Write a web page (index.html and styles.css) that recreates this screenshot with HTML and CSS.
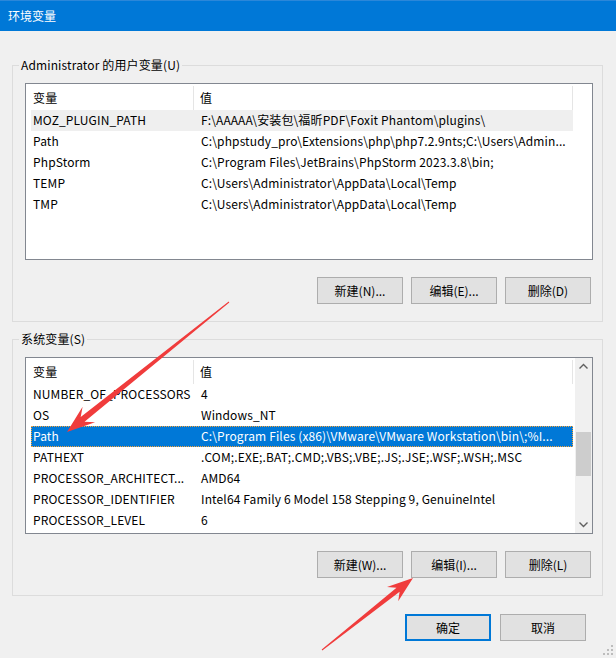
FILE: index.html
```html
<!DOCTYPE html>
<html lang="zh-CN" class="html">
<head>
    <meta charset="UTF-8">
    <meta name="viewport" content="width=device-width, initial-scale=1.0">
    <title>环境变量</title>
    <link rel="stylesheet" href="styles.css">
</head>
<body class="body">
    <header class="titlebar">环境变量</header>

    <main class="dialog">
        <fieldset class="group group_user">
            <legend class="group__title">Administrator 的用户变量(U)</legend>
            <div class="list">
                <div class="list__body">
                    <div class="list__head">
                        <div class="list__col list__col_name">变量</div>
                        <div class="list__col list__col_value">值</div>
                    </div>
                    <div class="list__row list__row_hover">
                        <span class="list__cell">MOZ_PLUGIN_PATH</span>
                        <span class="list__cell">F:\AAAAA\安装包\福昕PDF\Foxit Phantom\plugins\</span>
                    </div>
                    <div class="list__row">
                        <span class="list__cell">Path</span>
                        <span class="list__cell">C:\phpstudy_pro\Extensions\php\php7.2.9nts;C:\Users\Admin...</span>
                    </div>
                    <div class="list__row">
                        <span class="list__cell">PhpStorm</span>
                        <span class="list__cell">C:\Program Files\JetBrains\PhpStorm 2023.3.8\bin;</span>
                    </div>
                    <div class="list__row">
                        <span class="list__cell">TEMP</span>
                        <span class="list__cell">C:\Users\Administrator\AppData\Local\Temp</span>
                    </div>
                    <div class="list__row">
                        <span class="list__cell">TMP</span>
                        <span class="list__cell">C:\Users\Administrator\AppData\Local\Temp</span>
                    </div>
                </div>
            </div>
            <div class="group__buttons">
                <button class="button">新建(N)...</button>
                <button class="button">编辑(E)...</button>
                <button class="button">删除(D)</button>
            </div>
        </fieldset>

        <fieldset class="group group_system">
            <legend class="group__title">系统变量(S)</legend>
            <div class="list">
                <div class="list__body">
                    <div class="list__head">
                        <div class="list__col list__col_name">变量</div>
                        <div class="list__col list__col_value">值</div>
                    </div>
                    <div class="list__row">
                        <span class="list__cell">NUMBER_OF_PROCESSORS</span>
                        <span class="list__cell">4</span>
                    </div>
                    <div class="list__row">
                        <span class="list__cell">OS</span>
                        <span class="list__cell">Windows_NT</span>
                    </div>
                    <div class="list__row list__row_selected">
                        <span class="list__cell">Path</span>
                        <span class="list__cell">C:\Program Files (x86)\VMware\VMware Workstation\bin\;%I...</span>
                    </div>
                    <div class="list__row">
                        <span class="list__cell">PATHEXT</span>
                        <span class="list__cell">.COM;.EXE;.BAT;.CMD;.VBS;.VBE;.JS;.JSE;.WSF;.WSH;.MSC</span>
                    </div>
                    <div class="list__row">
                        <span class="list__cell">PROCESSOR_ARCHITECT...</span>
                        <span class="list__cell">AMD64</span>
                    </div>
                    <div class="list__row">
                        <span class="list__cell">PROCESSOR_IDENTIFIER</span>
                        <span class="list__cell">Intel64 Family 6 Model 158 Stepping 9, GenuineIntel</span>
                    </div>
                    <div class="list__row">
                        <span class="list__cell">PROCESSOR_LEVEL</span>
                        <span class="list__cell">6</span>
                    </div>
                </div>
                <div class="scrollbar">
                    <svg class="scrollbar__arrow" width="17" height="17" viewBox="0 0 17 17">
                        <polyline points="4.5,10.5 8.5,6.5 12.5,10.5" fill="none" stroke="#606060" stroke-width="1.4"/>
                    </svg>
                    <div class="scrollbar__track">
                        <div class="scrollbar__thumb"></div>
                    </div>
                    <svg class="scrollbar__arrow" width="17" height="17" viewBox="0 0 17 17">
                        <polyline points="4.5,6.5 8.5,10.5 12.5,6.5" fill="none" stroke="#606060" stroke-width="1.4"/>
                    </svg>
                </div>
            </div>
            <div class="group__buttons">
                <button class="button">新建(W)...</button>
                <button class="button">编辑(I)...</button>
                <button class="button">删除(L)</button>
            </div>
        </fieldset>

        <div class="dialog__footer">
            <button class="button button_default">确定</button>
            <button class="button">取消</button>
        </div>
    </main>

    <!-- resize grip -->
    <svg class="grip" width="12" height="12" viewBox="0 0 12 12">
        <rect x="9" y="1" width="2" height="2" fill="#bcbcbc"/>
        <rect x="9" y="5" width="2" height="2" fill="#bcbcbc"/>
        <rect x="5" y="5" width="2" height="2" fill="#bcbcbc"/>
        <rect x="9" y="9" width="2" height="2" fill="#bcbcbc"/>
        <rect x="5" y="9" width="2" height="2" fill="#bcbcbc"/>
        <rect x="1" y="9" width="2" height="2" fill="#bcbcbc"/>
    </svg>

    <!-- red annotation arrows -->
    <svg class="annotations" width="616" height="658" viewBox="0 0 616 658">
        <polygon fill="#f03c3c" points="228.7,301.6 80.7,417.1 82.6,406.7 67,432 95.1,422.3 84.5,421.8 229.3,302.4"/>
        <polygon fill="#f03c3c" points="322.3,650.4 399.6,591.8 398.2,601.2 413,578 387,587.1 396.5,587.8 321.7,649.6"/>
    </svg>
</body>
</html>
```

FILE: styles.css
```css
* {
    margin: 0;
    padding: 0;
    box-sizing: border-box;
}

.html,
.body {
    width: 100%;
    height: 100%;
}

.body {
    position: relative;
    overflow: hidden;
    background-color: #f0f0f0;
    color: #000;
    font-family: "Noto Sans CJK SC", sans-serif;
    font-size: 12px;
    letter-spacing: 0.13px;
}

.titlebar {
    height: 31px;
    padding-left: 8px;
    border-top: 1px solid #2b87d9;
    background-color: #0078d7;
    color: #fff;
    line-height: 29px;
    letter-spacing: 0;
}

.dialog {
    padding: 26px 13px 0 12px;
}

.group {
    min-width: 0;
    padding: 10px 9px 17px 12px;
    border: 1px solid #dcdcdc;
}

.group_system {
    margin-top: 9px;
}

.group__title {
    margin-left: -6px;
    padding: 0 2px;
    line-height: 16px;
}

.group__buttons {
    display: flex;
    justify-content: flex-end;
    gap: 8px;
    margin-top: 17px;
    padding-right: 2px;
}

.list {
    display: flex;
    height: 177px;
    border: 1px solid #828790;
    background-color: #fff;
}

.list__body {
    flex: 1;
    padding-left: 5px;
    overflow: hidden;
}

.list__head {
    display: grid;
    grid-template-columns: 163px 379px;
    height: 26px;
    padding-top: 2px;
}

.list__col {
    border-right: 1px solid #e5e5e5;
    line-height: 24px;
}

.list__col_name {
    padding-left: 2px;
}

.list__col_value {
    padding-left: 6px;
}

.list__row {
    display: grid;
    grid-template-columns: 168px 374px;
    width: 542px;
    height: 21px;
    line-height: 20px;
}

.list__cell {
    padding-left: 2px;
    white-space: nowrap;
    overflow: hidden;
}

.list__row_hover {
    background-color: #efefef;
}

.list__row_selected {
    background-color: #0078d7;
    color: #fff;
    outline: 1px dotted #f7a43a;
    outline-offset: -1px;
}

.scrollbar {
    display: flex;
    flex-direction: column;
    width: 17px;
    background-color: #f0f0f0;
}

.scrollbar__arrow {
    flex: none;
}

.scrollbar__track {
    flex: 1;
    padding: 57px 1px 0;
}

.scrollbar__thumb {
    height: 44px;
    background-color: #cdcdcd;
}

.button {
    width: 86px;
    height: 27px;
    border: 1px solid #adadad;
    background-color: #e1e1e1;
    color: #000;
    font: inherit;
}

.button_default {
    border: 2px solid #0078d7;
}

.dialog__footer {
    display: flex;
    justify-content: flex-end;
    gap: 9px;
    margin-top: 18px;
    padding-right: 17px;
}

.grip {
    position: absolute;
    right: 2px;
    bottom: 2px;
}

.annotations {
    position: absolute;
    top: 0;
    left: 0;
    pointer-events: none;
}
```
